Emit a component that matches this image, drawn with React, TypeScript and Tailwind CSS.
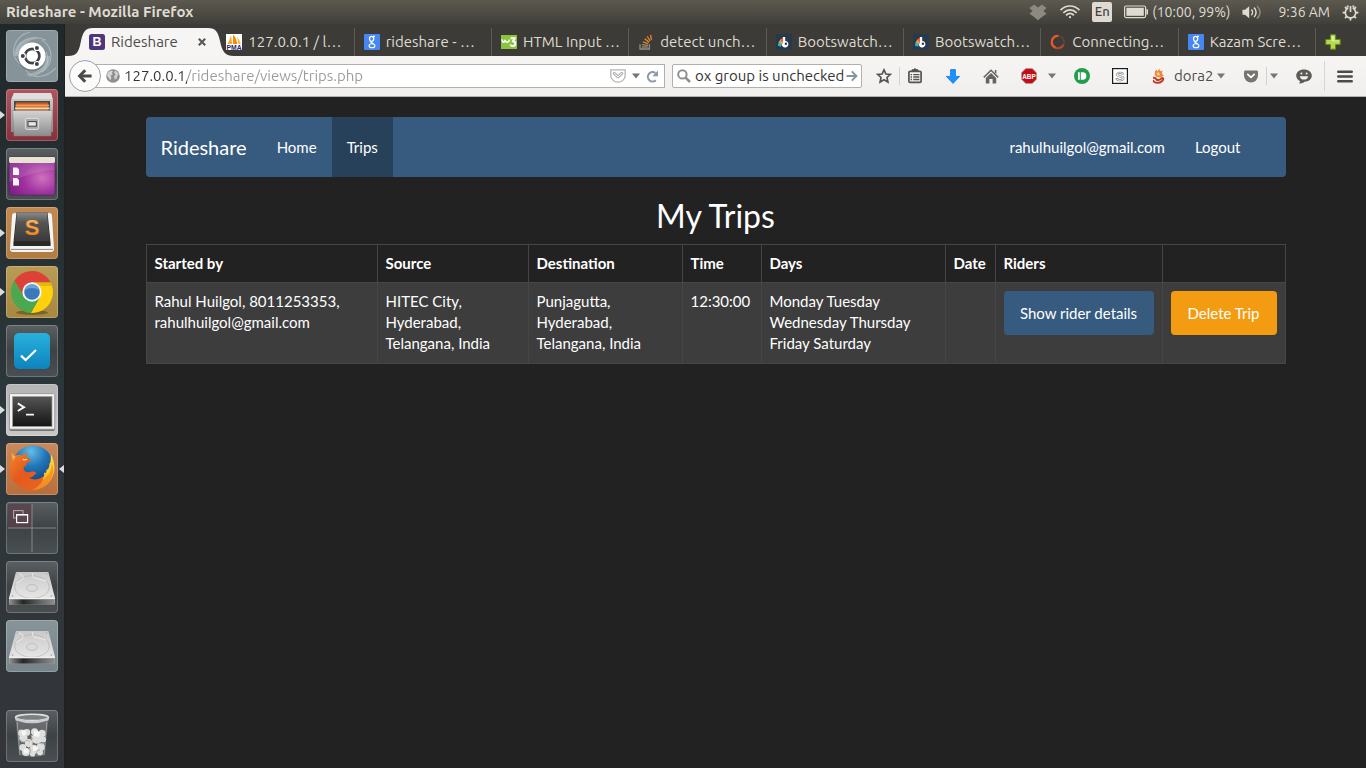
import type { ReactNode } from "react";

/* ---------- Panel icons ---------- */

const DropboxIcon = () => (
  <svg width="18" height="17" viewBox="0 0 18 17" fill="#8b8981">
    <path d="M5.2 0.6 9 3.4 12.8 0.6 17.6 4 14.4 6.9 17.6 9.8 13.6 12.6 9 16.2 4.4 12.6 0.4 9.8 3.6 6.9 0.4 4Z" />
  </svg>
);

const WifiIcon = () => (
  <svg width="22" height="16" viewBox="0 0 22 16" fill="none" stroke="#dfdbd2" strokeWidth="1.7">
    <path d="M1.5 6.2C7 0.6 15 0.6 20.5 6.2" />
    <path d="M4.3 8.8C8.2 5 13.8 5 17.7 8.8" />
    <path d="M7 11.3C9.4 9 12.6 9 15 11.3" />
    <circle cx="11" cy="13.2" r="1.1" fill="#dfdbd2" stroke="none" />
  </svg>
);

const BatteryIcon = () => (
  <svg width="24" height="14" viewBox="0 0 24 14">
    <rect x="0.6" y="1" width="21" height="11.6" rx="1.5" fill="none" stroke="#dfdbd2" strokeWidth="1.2" />
    <rect x="2.4" y="2.8" width="17.4" height="8" fill="#dfdbd2" />
    <path d="M22.4 4.2H24v5.2h-1.6z" fill="#dfdbd2" />
  </svg>
);

const VolumeIcon = () => (
  <svg width="20" height="15" viewBox="0 0 20 15" fill="none" strokeWidth="1.5">
    <path d="M0.5 4.8H3L7.2 1.2V13.2L3 9.8H0.5Z" fill="#dfdbd2" />
    <path d="M9.4 4.4C10.9 6 10.9 8.6 9.4 10.2" stroke="#dfdbd2" />
    <path d="M12 2.6C14.8 5 14.8 9.6 12 12" stroke="#dfdbd2" />
    <path d="M15 1C19 4.4 19 10.2 15 13.6" stroke="#8b8981" />
  </svg>
);

const GearIcon = () => (
  <svg width="17" height="17" viewBox="0 0 17 17" fill="none" stroke="#dfdbd2">
    <path d="M6.2 4A5.2 5.2 0 1 0 10.8 4" strokeWidth="1.7" />
    <path d="M8.5 2V8" strokeWidth="1.7" />
    <path
      d="M4.8 4.8 3 3M12.2 4.8 14 3M3.3 8.6H0.6M13.7 8.6H16.4M4.8 12.3 3 14.1M12.2 12.3 14 14.1M8.5 13.8V16.5M6 3.6 5.4 1.4M11 3.6 11.6 1.4"
      strokeWidth="1.8"
    />
  </svg>
);

/* ---------- Tab favicons ---------- */

const BootstrapFav = () => (
  <svg width="16" height="16" viewBox="0 0 16 16">
    <rect width="16" height="16" rx="2.5" fill="#4f3579" />
    <text x="8" y="12.4" textAnchor="middle" fontFamily="Liberation Sans, sans-serif" fontWeight="bold" fontSize="12.5" fill="#fff">B</text>
  </svg>
);

const PmaFav = () => (
  <svg width="16" height="16" viewBox="0 0 16 16">
    <rect width="16" height="16" fill="#fff" />
    <path d="M1.4 10C3 7.6 4 4.6 5 1.6L6.2 10Z" fill="#f7a531" />
    <path d="M7 10V0.6C9.6 3 10.8 6.4 11.2 10Z" fill="#f58a00" />
    <path d="M11.8 10C12 7 11.6 5 10.8 3.2 13.4 5 14.4 7.6 14.8 10Z" fill="#f9b95b" />
    <text x="8" y="15.8" textAnchor="middle" fontFamily="Liberation Sans, sans-serif" fontWeight="bold" fontSize="6.8" fill="#27276b">PMA</text>
  </svg>
);

const GoogleFav = () => (
  <svg width="16" height="16" viewBox="0 0 16 16">
    <rect width="16" height="16" rx="1" fill="#4787f3" />
    <g fill="none" stroke="#fff">
      <ellipse cx="7.6" cy="4.8" rx="2.1" ry="2.5" strokeWidth="1.3" />
      <ellipse cx="8" cy="11.8" rx="2.9" ry="2" strokeWidth="1.1" />
      <path d="M9 2.3H11M7 7.4C6.2 8.6 8 8.8 9.6 9.9" strokeWidth="1.2" />
    </g>
  </svg>
);

const W3Fav = () => (
  <svg width="16" height="16" viewBox="0 0 16 16">
    <rect y="1" width="16" height="14" fill="#8bc53f" />
    <g fill="none" stroke="#fff" strokeLinejoin="round">
      <path d="M1 5.4C1.4 8.6 3.4 9 4 6.2 4.6 9 7.6 9 8.4 5.6" strokeWidth="1.6" />
      <path d="M9.6 4.2H14L11.8 7.2C15.4 7.4 15 12 11.8 12 10.6 12 9.8 11.4 9.4 10.6" strokeWidth="1.9" />
    </g>
  </svg>
);

const StackFav = () => (
  <svg width="16" height="16" viewBox="0 0 16 16" fill="none">
    <path d="M2 10.2V15H11.4V10.2" stroke="#8f8e8a" strokeWidth="1.3" />
    <path d="M3.8 13H9.8" stroke="#9b8f7d" strokeWidth="1.3" />
    <path d="M4 10.6 10 11.3" stroke="#b08a5b" strokeWidth="1.3" />
    <path d="M4.8 7.8 10.4 9.7" stroke="#cf8a3b" strokeWidth="1.3" />
    <path d="M6.6 4.8 11.2 8.3" stroke="#e58a29" strokeWidth="1.3" />
    <path d="M9.2 2.4 12.2 7" stroke="#f08424" strokeWidth="1.3" />
    <path d="M12.6 0.8 13.4 6" stroke="#f58220" strokeWidth="1.3" />
  </svg>
);

const BootswatchFav = () => (
  <svg width="16" height="16" viewBox="0 0 16 16">
    <rect width="16" height="16" rx="1" fill="#26394d" />
    <path d="M7.2 3 4.4 5.6V9H7.4Z" fill="#e8603c" />
    <path d="M4.4 5.6 2.6 8.2 4.6 10.8 7 9Z" fill="#f2a03a" />
    <path d="M2.6 8.2 1.8 11.6 5 12.8 6 10Z" fill="#36b5c8" />
    <path d="M7 3H9.2V6.9A3.3 3.3 0 1 1 6 11.4C5.6 10 7 9 7 8Z" fill="#fff" />
    <circle cx="9.9" cy="9.8" r="1.2" fill="#26394d" />
  </svg>
);

const SpinnerFav = () => (
  <svg width="16" height="16" viewBox="0 0 16 16" fill="none" strokeWidth="2.2">
    <circle cx="8" cy="8" r="6.2" stroke="#5b4036" />
    <path d="M13.6 10.6A6.2 6.2 0 0 1 4.4 13.1" stroke="#b04a2b" />
    <path d="M5.4 13.6A6.2 6.2 0 0 1 8.4 1.8" stroke="#e9572b" />
  </svg>
);

/* ---------- Toolbar icons ---------- */

const Caret = () => (
  <svg width="8" height="6" viewBox="0 0 8 6">
    <path d="M0 0.6H8L4 5.6Z" fill="#77756f" />
  </svg>
);

const BackIcon = () => (
  <svg width="16" height="16" viewBox="0 0 16 16" fill="none" stroke="#4c4b48">
    <path d="M8.2 2.2 2.6 8 8.2 13.8" strokeWidth="3" />
    <path d="M3 8H14.6" strokeWidth="3" />
  </svg>
);

const GlobeIcon = () => (
  <svg width="14" height="14" viewBox="0 0 14 14" className="shrink-0">
    <circle cx="7" cy="7" r="6.8" fill="#8e8e8e" />
    <path d="M2 3.6C4 1.2 6.4 1.4 7 2.2L5.8 3.8 6.8 5.2 4.6 6.6 5.4 8.6 4.4 11.6 2.6 8.8 1 6.6Z" fill="#d6d6d6" />
    <path d="M8.6 1.6 11.4 3 12.8 6 11.4 6.6 10.6 9.8 8.8 10.6 8 7.4 9.4 5.4 8.2 3.8Z" fill="#cfcfcf" />
  </svg>
);

const PocketOutline = () => (
  <svg width="16" height="14" viewBox="0 0 16 14" fill="none" stroke="#b5b5b5">
    <path d="M0.8 0.8H15.2V6.2A7.2 7 0 0 1 0.8 6.2Z" strokeWidth="1.3" />
    <path d="M4.2 4.4 8 8 11.8 4.4" strokeWidth="3" strokeLinecap="round" strokeLinejoin="round" />
    <path d="M4.2 4.4 8 8 11.8 4.4" strokeWidth="1" stroke="#f5f5f5" strokeLinecap="round" strokeLinejoin="round" />
  </svg>
);

const ReloadIcon = () => (
  <svg width="13" height="13" viewBox="0 0 13 13">
    <path d="M9.8 10.2A4.7 4.7 0 1 1 9.4 3" fill="none" stroke="#8d9aa8" strokeWidth="2.1" />
    <path d="M12 0.6V6.2H6.4Z" fill="#8d9aa8" />
  </svg>
);

const SearchIcon = () => (
  <svg width="14" height="14" viewBox="0 0 14 14" fill="none" stroke="#8f8f8f" className="shrink-0">
    <circle cx="5.4" cy="5.4" r="4.2" strokeWidth="2" />
    <path d="M8.6 8.6 13 13" strokeWidth="2.6" />
  </svg>
);

const GoIcon = () => (
  <svg width="12" height="12" viewBox="0 0 12 12" fill="none" stroke="#8795a3" strokeWidth="2">
    <path d="M0.5 6H10M5.8 1.4 10.4 6 5.8 10.6" />
  </svg>
);

const StarIcon = () => (
  <svg width="16" height="16" viewBox="0 0 16 16" fill="none" stroke="#555451" strokeWidth="1.7" strokeLinejoin="miter">
    <path d="M8 1.9 9.9 6 14.2 6.5 11 9.5 11.9 14 8 11.8 4.1 14 5 9.5 1.8 6.5 6.1 6Z" />
  </svg>
);

const ClipboardIcon = () => (
  <svg width="14" height="16" viewBox="0 0 14 16" fill="none" stroke="#555451">
    <rect x="0.9" y="3.4" width="12.2" height="11" rx="1.2" strokeWidth="1.7" />
    <path d="M4 3.2V1.8H5.4A1.7 1.4 0 0 1 8.6 1.8H10V3.2Z" fill="#555451" strokeWidth="1" />
    <path d="M2.6 6.6H4M5.2 6.6H11.4M2.6 9H4M5.2 9H11.4M2.6 11.5H4M5.2 11.5H11.4" strokeWidth="1.3" />
  </svg>
);

const DownloadIcon = () => (
  <svg width="14" height="15" viewBox="0 0 14 15">
    <path d="M4.6 0.6H9.4V7.4H13.6L7 14.4 0.4 7.4H4.6Z" fill="#1e90ff" stroke="#0b76e0" strokeWidth="0.8" strokeLinejoin="round" />
  </svg>
);

const HomeIcon = () => (
  <svg width="16" height="15" viewBox="0 0 16 15">
    <path d="M0.8 8.4 8 1.2 15.2 8.4" fill="none" stroke="#66645f" strokeWidth="1.5" />
    <path d="M11.8 1H13.4V5L11.8 3.4Z" fill="#66645f" />
    <path d="M2.8 9 8 4 13.2 9V14.6H9.6V10H6.4V14.6H2.8Z" fill="#66645f" />
  </svg>
);

const AbpIcon = () => (
  <svg width="16" height="16" viewBox="0 0 16 16">
    <path d="M4.8 0.5H11.2L15.5 4.8V11.2L11.2 15.5H4.8L0.5 11.2V4.8Z" fill="#c70d13" stroke="#a5a19c" strokeWidth="0.8" />
    <text x="8" y="10.6" textAnchor="middle" fontFamily="Liberation Sans, sans-serif" fontWeight="bold" fontSize="6.4" fill="#fff">ABP</text>
  </svg>
);

const PushbulletIcon = () => (
  <svg width="16" height="16" viewBox="0 0 16 16">
    <circle cx="8" cy="8" r="8" fill="#239d4a" />
    <path d="M4 4.2H5.8V11.8H4ZM6.8 4.2H8.6A3.8 3.8 0 0 1 8.6 11.8H6.8Z" fill="#fff" />
  </svg>
);

const ScriptIcon = () => (
  <svg width="16" height="16" viewBox="0 0 16 16">
    <rect x="0.6" y="0.6" width="14.8" height="14.8" fill="#fff" stroke="#1c1c1c" strokeWidth="1.2" />
    <text x="8" y="12.8" textAnchor="middle" fontFamily="Liberation Sans, sans-serif" fontWeight="bold" fontSize="13.5" fill="#fff" stroke="#777" strokeWidth="0.6">S</text>
  </svg>
);

const DoraIcon = () => (
  <svg width="14" height="16" viewBox="0 0 14 16" fill="none">
    <path d="M4 3.6 5.6 1.4 6.4 3.6 8.6 0.8 9 3.2 11.4 2.6 11 5.4 12.6 7.8 9.6 9.4 5.6 9 3.6 6.8Z" fill="#ea8a34" />
    <path d="M5.4 5 8 4.2 9 7.2 6.4 7.6Z" fill="#f9d294" />
    <path d="M2 9.8C6.6 9.2 3.8 12.6 7.4 12 11 11.4 10.6 9 12 10.2 13 12 10 14.8 6.6 14.8 3 14.8 2.4 13.2 3 12.4" stroke="#bf3c26" strokeWidth="2" />
  </svg>
);

const PocketSolid = () => (
  <svg width="14" height="13" viewBox="0 0 14 13">
    <path d="M1.4 0.4H12.6Q14 0.4 14 1.8V5.6A7 7 0 0 1 0 5.6V1.8Q0 0.4 1.4 0.4Z" fill="#77756f" />
    <path d="M3.8 4.4 7 7.4 10.2 4.4" fill="none" stroke="#fff" strokeWidth="1.8" strokeLinecap="round" strokeLinejoin="round" />
  </svg>
);

const HelloIcon = () => (
  <svg width="16" height="15" viewBox="0 0 16 15">
    <path d="M8 0.4C12.6 0.4 15.8 3 15.8 6.6S12.6 12.8 8.6 12.8C7.4 14 5 14.6 3 14.4 4 13.6 4 12.8 3.8 12 1.6 10.8 0.2 9 0.2 6.6 0.2 3 3.4 0.4 8 0.4Z" fill="#5c5b56" />
    <circle cx="5.4" cy="4.6" r="1" fill="#f3f2f1" />
    <circle cx="10.6" cy="4.6" r="1" fill="#f3f2f1" />
    <path d="M3.8 7.2H12.2C11.8 9.6 10.4 10.6 8 10.6S4.2 9.6 3.8 7.2Z" fill="#f3f2f1" />
  </svg>
);

const MenuIcon = () => (
  <svg width="16" height="13" viewBox="0 0 16 13" stroke="#4c4b48" strokeWidth="2.6" strokeLinecap="round">
    <path d="M1.3 1.8H14.7M1.3 6.5H14.7M1.3 11.2H14.7" />
  </svg>
);

/* ---------- Launcher artwork ---------- */

const Art = ({ children }: { children: ReactNode }) => (
  <svg width="52" height="52" viewBox="0 0 52 52" className="block">
    {children}
  </svg>
);

const DashArt = () => (
  <Art>
    <g fill="none" stroke="#c4ced2" strokeOpacity="0.55" strokeWidth="1.2">
      <path d="M11 24C10 10 26 4 40 10M14 34C2 24 8 6 24 2M40 22C46 34 36 46 22 46M36 42C48 34 48 18 36 10M20 40C26 50 40 48 50 38" />
    </g>
    <path d="M8 26C8 12 22 6 36 8 26 8 14 14 13 26ZM44 26C44 40 32 48 18 44 30 44 40 38 39 26Z" fill="#c2ccd0" fillOpacity="0.45" />
    <circle cx="26" cy="27" r="14" fill="#5d6a70" fillOpacity="0.6" />
    <circle cx="26" cy="26" r="13.6" fill="#fff" />
    <circle cx="26.2" cy="26" r="7.2" fill="none" stroke="#3c4447" strokeWidth="2.7" />
    <g fill="#3c4447" stroke="#fff" strokeWidth="1.2">
      <circle cx="16.8" cy="26" r="2.6" />
      <circle cx="30.9" cy="17.9" r="2.6" />
      <circle cx="30.9" cy="34.1" r="2.6" />
    </g>
  </Art>
);

const FilesArt = () => (
  <Art>
    <defs>
      <linearGradient id="cab" x1="0" y1="0" x2="0" y2="1">
        <stop offset="0" stopColor="#d4d4d4" />
        <stop offset="1" stopColor="#8c8c8c" />
      </linearGradient>
    </defs>
    <path d="M8 4H45L47 11V43H5V11Z" fill="url(#cab)" />
    <path d="M8 4H45L46.6 10H5.6Z" fill="#dedede" />
    <rect x="8" y="12" width="36" height="10" fill="#4d4845" />
    <path d="M10 13.6H42V22H10Z" fill="#c85f22" />
    <path d="M9.5 15.4H43V17.4H9.5Z" fill="#f39b50" />
    <path d="M9 18.4H43.5V20.2H9Z" fill="#fbe0bd" />
    <path d="M6.6 21.4H46.4L45 47H8Z" fill="url(#cab)" stroke="#7f7f7f" strokeWidth="0.5" />
    <rect x="19.4" y="29.4" width="13.2" height="11" rx="1.6" fill="#a8a8a8" stroke="#dedede" strokeWidth="1" />
    <rect x="22" y="32.6" width="8.4" height="4.6" fill="#e8e8e8" stroke="#4c4c4c" strokeWidth="1.1" />
  </Art>
);

const DesktopArt = () => (
  <Art>
    <defs>
      <radialGradient id="desk" cx="0.72" cy="0.55" r="0.8">
        <stop offset="0" stopColor="#cf72bd" />
        <stop offset="0.5" stopColor="#a033a0" />
        <stop offset="1" stopColor="#7d1d86" />
      </radialGradient>
    </defs>
    <rect x="3" y="9" width="46" height="38" rx="2" fill="url(#desk)" stroke="#511c5b" strokeWidth="0.6" />
    <path d="M3.4 15H48.6V22C34 22 18 28 3.4 34Z" fill="#fff" fillOpacity="0.12" />
    <rect x="3" y="9" width="46" height="6" rx="1.4" fill="#e6e4d0" />
    <path d="M7 19.4H11L13 21.4V27H7ZM7 30H11L13 32V37.6H7Z" fill="#f6f2f6" />
  </Art>
);

const SublimeArt = () => (
  <Art>
    <defs>
      <linearGradient id="key" x1="0" y1="0" x2="0" y2="1">
        <stop offset="0" stopColor="#8a8a8a" />
        <stop offset="0.35" stopColor="#555" />
        <stop offset="1" stopColor="#3a3a3a" />
      </linearGradient>
      <linearGradient id="ess" x1="0" y1="0" x2="0" y2="1">
        <stop offset="0" stopColor="#ffc36b" />
        <stop offset="1" stopColor="#f1760b" />
      </linearGradient>
    </defs>
    <path d="M6 9Q6 6 9 6H43Q46 6 46 9L48 42Q48 45 45 45H7Q4 45 4 42Z" fill="#f4f4f4" />
    <path d="M5 42.4H47" stroke="#8d8d8d" strokeWidth="1" />
    <path d="M10.5 5.4H41.5L44.6 36V39H7.4V36Z" fill="#282828" />
    <path d="M11 5.4H41L43.8 34.2H8.2Z" fill="url(#key)" />
    <text x="26" y="27.6" textAnchor="middle" fontFamily="Liberation Sans, sans-serif" fontWeight="bold" fontSize="22" fill="url(#ess)">S</text>
  </Art>
);

const ChromeArt = () => (
  <Art>
    <ellipse cx="26" cy="46.6" rx="16" ry="2.4" fill="#4d3d16" fillOpacity="0.5" />
    <path d="M8.4 14.6A21 21 0 0 1 44.7 16.5L26 16.5 17.8 30.75Z" fill="#dc4238" />
    <path d="M44.7 16.5A21 21 0 0 1 24.9 46.95L34.2 30.75 26 16.5Z" fill="#fdd20a" />
    <path d="M24.9 46.95A21 21 0 0 1 8.4 14.6L17.8 30.75 34.2 30.75Z" fill="#4aa84f" />
    <path d="M26 16.5H44.7L46 20H28Z" fill="#b3842a" fillOpacity="0.35" />
    <circle cx="26" cy="26" r="9.7" fill="#f4f4f4" />
    <circle cx="26" cy="26" r="7.8" fill="#3a79bd" />
    <path d="M18.6 24A7.8 7.8 0 0 1 33.4 24Q26 20 18.6 24Z" fill="#6ba4db" />
  </Art>
);

const TasksArt = () => (
  <Art>
    <defs>
      <linearGradient id="task" x1="0" y1="0" x2="0" y2="1">
        <stop offset="0" stopColor="#29b1dd" />
        <stop offset="1" stopColor="#0d83bd" />
      </linearGradient>
    </defs>
    <rect x="8" y="8" width="36" height="36" rx="5" fill="url(#task)" />
    <path d="M15 30.6 19.6 35 30 25" fill="none" stroke="#fff" strokeWidth="2.2" />
  </Art>
);

const TerminalArt = () => (
  <Art>
    <defs>
      <linearGradient id="term" x1="0" y1="0" x2="0" y2="1">
        <stop offset="0" stopColor="#565656" />
        <stop offset="0.55" stopColor="#303030" />
        <stop offset="1" stopColor="#151515" />
      </linearGradient>
    </defs>
    <rect x="3.4" y="10" width="45.4" height="37" rx="1.4" fill="#777" />
    <rect x="3.4" y="9.6" width="45.4" height="35.6" rx="1.2" fill="#f3f3f3" stroke="#8b8b8b" strokeWidth="0.8" />
    <rect x="6.6" y="12.6" width="39.4" height="30" fill="url(#term)" stroke="#9b9b9b" strokeWidth="0.8" />
    <path d="M11.8 19.4 18 23.2 11.8 27" fill="none" stroke="#f4f4f4" strokeWidth="2" />
    <path d="M20 30.6H28" stroke="#f4f4f4" strokeWidth="1.6" />
  </Art>
);

const FirefoxArt = () => (
  <Art>
    <defs>
      <radialGradient id="sea" cx="0.45" cy="0.15" r="0.8">
        <stop offset="0" stopColor="#66bde6" />
        <stop offset="0.45" stopColor="#2277b9" />
        <stop offset="1" stopColor="#133f79" />
      </radialGradient>
      <linearGradient id="fox" x1="0" y1="0" x2="0.9" y2="1">
        <stop offset="0" stopColor="#f08a2c" />
        <stop offset="0.5" stopColor="#e5591d" />
        <stop offset="1" stopColor="#e8641f" />
      </linearGradient>
      <linearGradient id="tail" x1="0" y1="0" x2="0" y2="1">
        <stop offset="0" stopColor="#fbe34a" />
        <stop offset="0.5" stopColor="#fac92d" />
        <stop offset="1" stopColor="#ef8322" />
      </linearGradient>
    </defs>
    <circle cx="27" cy="23" r="20.6" fill="url(#sea)" />
    <path d="M44.6 11C46.6 14 48.4 19 48.4 25 48.4 37 39 47 26 47 30 44 34 41 35.4 36 38 35 38.4 32 38 29.6 40 31 40.6 29 40.4 26.6 42.6 27 43.4 23.6 43.6 20 44.8 20.6 45 16 44.6 11Z" fill="url(#tail)" />
    <path d="M45.6 20C46 28 42 34 36 37.6 35 42 31 45 27 47 38 46 45.6 39 47 30 47.4 26 46.8 22 45.6 20Z" fill="#f08c22" fillOpacity="0.75" />
    <path d="M5.4 8C6.2 10.4 7.6 12 9.4 12.6 11.6 11.6 14 11.6 15.8 12.4 17.6 10.8 20 9.8 22.4 9.4 20.8 11 20.4 13 21 14.6L24.6 16.4C25.4 18.6 21.8 19.2 20.4 20.6 20.6 22.6 20 23.4 18.2 23.6 16.4 26.4 19.2 30.2 23.4 29.2 25.6 28.6 28.6 27.6 30.6 30.4 28.4 30.8 27.6 34.2 23.2 34.8 27.8 37.6 33.4 36.6 37.4 33 37 39 33 44 26 47 14 47.2 4.2 38 3.8 26.4 3.6 21.6 4.4 18 6 15 5 13 4.8 10.4 5.4 8Z" fill="url(#fox)" />
    <path d="M6 10C7 12 8.4 13.2 9.8 13.6 8.4 15 7.4 16.6 6.8 18.4 7 16.6 6.8 15.4 6.2 14.4Z" fill="#f9b04b" />
    <path d="M16.6 16.4C18 17 19.8 16.8 21 16" fill="none" stroke="#fbd7a1" strokeWidth="1.2" />
  </Art>
);

const WorkspaceArt = () => (
  <Art>
    <rect x="2" y="2" width="24" height="24" fill="#5b3f4b" fillOpacity="0.75" />
    <path d="M26 2V50M2 26H50" stroke="#8d9092" strokeWidth="0.9" />
    <rect x="7.6" y="8.6" width="9.4" height="7.4" fill="none" stroke="#b7abb0" strokeWidth="1" />
    <rect x="10.6" y="12.6" width="11" height="8" fill="#5d4450" stroke="#fff" strokeWidth="1.2" />
    <path d="M10.2 12.8H22" stroke="#fff" strokeWidth="1.6" />
  </Art>
);

const DriveArt = () => (
  <Art>
    <defs>
      <linearGradient id="lid" x1="0" y1="0" x2="0" y2="1">
        <stop offset="0" stopColor="#c9c9c9" />
        <stop offset="1" stopColor="#e6e6e6" />
      </linearGradient>
      <linearGradient id="lip" x1="0" y1="0" x2="1" y2="0">
        <stop offset="0" stopColor="#8f8f8f" />
        <stop offset="0.3" stopColor="#262626" />
        <stop offset="0.75" stopColor="#6c6c6c" />
        <stop offset="1" stopColor="#8d8d8d" />
      </linearGradient>
    </defs>
    <path d="M10 11H42.4L49 37H3Z" fill="url(#lid)" />
    <g fill="none" stroke="#b4b4b4" strokeWidth="0.7">
      <ellipse cx="26" cy="26" rx="17.4" ry="11.4" />
      <path d="M12 12.6C20 15 18 19 10 22M27 12C24 18 32 17 40 20" stroke="#f7f7f7" />
      <ellipse cx="26" cy="27" rx="5.6" ry="3.4" fill="#dadada" />
    </g>
    <g fill="#999">
      <circle cx="6.6" cy="35" r="0.8" />
      <circle cx="45.4" cy="35" r="0.8" />
      <circle cx="11.8" cy="12.8" r="0.6" />
      <circle cx="40.6" cy="12.8" r="0.6" />
    </g>
    <path d="M3 37H49V43.4H3Z" fill="#a3a3a3" />
    <path d="M3.6 38.4H48.4V43.4H3.6Z" fill="url(#lip)" />
    <path d="M3 37.4H49" stroke="#fafafa" strokeWidth="1" />
  </Art>
);

const TrashArt = () => (
  <Art>
    <path d="M9.6 9 13 45Q26 49 39 45L42.4 9Z" fill="#a5a9aa" fillOpacity="0.32" />
    <path d="M11.2 12 14 45M40.8 12 38 45" stroke="#dfe1e2" strokeOpacity="0.45" strokeWidth="1" />
    <g fill="#dededc">
      <circle cx="15.6" cy="23" r="3.4" />
      <circle cx="20.8" cy="22.4" r="3.4" />
      <circle cx="17.4" cy="28" r="4.2" />
      <circle cx="28.6" cy="21.8" r="3.6" />
      <circle cx="36" cy="23.4" r="3.6" />
      <circle cx="31" cy="28.4" r="5.4" />
      <circle cx="37" cy="29.6" r="3" />
      <circle cx="22.8" cy="33" r="4" />
      <circle cx="16.8" cy="37.4" r="3.4" />
      <circle cx="20" cy="42" r="4" />
      <circle cx="28" cy="39.4" r="4.6" />
      <circle cx="34.6" cy="37" r="4" />
      <circle cx="34" cy="42.6" r="3" />
      <circle cx="26.6" cy="44" r="2.6" />
    </g>
    <g fill="#f6f6f4">
      <path d="M15 21 19 20 20.6 24 17 26ZM28 20 34 22 33 27 28 26ZM17 40 21 38 23 42 19 44ZM27 36 32 37 31 41 27 41Z" />
    </g>
    <path d="M14 30 18 32 21 30 24 32M25 25 26.4 29 25 31M22 37 25 40 23.4 43M33 33 35.6 34 38 33M30 43 31.6 40 34 40" fill="none" stroke="#acadab" strokeWidth="0.9" />
    <ellipse cx="26" cy="7.4" rx="16.4" ry="3.2" fill="#7d8081" stroke="#e2e2e2" strokeWidth="1.6" />
    <path d="M9 7.4Q26 14.6 43 7.4L42.4 10.6Q26 16 9.6 10.6Z" fill="#cbcccb" />
  </Art>
);

/* ---------- Data ---------- */

const tabs: { title: string; icon: ReactNode; active?: boolean }[] = [
  { title: "Rideshare", icon: <BootstrapFav />, active: true },
  { title: "127.0.0.1 / l…", icon: <PmaFav /> },
  { title: "rideshare - …", icon: <GoogleFav /> },
  { title: "HTML Input …", icon: <W3Fav /> },
  { title: "detect unch…", icon: <StackFav /> },
  { title: "Bootswatch…", icon: <BootswatchFav /> },
  { title: "Bootswatch…", icon: <BootswatchFav /> },
  { title: "Connecting…", icon: <SpinnerFav /> },
  { title: "Kazam Scre…", icon: <GoogleFav /> },
];

const darkTile = "bg-linear-to-b from-[#5a5f61] via-[#3d4245] to-[#4a4f52]";

const launcher: { name: string; art: ReactNode; tile: string; running?: boolean; focused?: boolean; last?: boolean }[] = [
  { name: "Search your computer", art: <DashArt />, tile: "bg-[#869398]" },
  { name: "Files", art: <FilesArt />, tile: "bg-linear-to-b from-[#b0555f] to-[#86303c]", running: true },
  { name: "Desktop", art: <DesktopArt />, tile: darkTile },
  { name: "Sublime Text", art: <SublimeArt />, tile: "bg-linear-to-b from-[#c08a52] to-[#b27b40]", running: true },
  { name: "Google Chrome", art: <ChromeArt />, tile: "bg-linear-to-b from-[#b89b55] to-[#a6883f]", running: true },
  { name: "Tasks", art: <TasksArt />, tile: darkTile },
  { name: "Terminal", art: <TerminalArt />, tile: "bg-linear-to-b from-[#b4b4b4] to-[#c8c8c8]", running: true },
  { name: "Firefox", art: <FirefoxArt />, tile: "bg-linear-to-b from-[#c98a5c] to-[#b86e3c]", running: true, focused: true },
  { name: "Workspace Switcher", art: <WorkspaceArt />, tile: darkTile },
  { name: "Drive 1", art: <DriveArt />, tile: darkTile },
  { name: "Drive 2", art: <DriveArt />, tile: "bg-linear-to-b from-[#879499] to-[#76848a]" },
  { name: "Trash", art: <TrashArt />, tile: darkTile, last: true },
];

const columns = [
  { label: "Started by", width: "" },
  { label: "Source", width: "w-[151px]" },
  { label: "Destination", width: "w-[154px]" },
  { label: "Time", width: "w-[79px]" },
  { label: "Days", width: "w-[184px]" },
  { label: "Date", width: "w-[50px]" },
  { label: "Riders", width: "w-[167px]" },
  { label: "", width: "w-[123px]" },
];

const trips = [
  {
    startedBy: "Rahul Huilgol, 8011253353, rahulhuilgol@gmail.com",
    source: "HITEC City, Hyderabad, Telangana, India",
    destination: "Punjagutta, Hyderabad, Telangana, India",
    time: "12:30:00",
    days: "Monday Tuesday Wednesday Thursday Friday Saturday",
    date: "",
  },
];

/* ---------- Layout ---------- */

const uiFont = "font-['Ubuntu','Noto_Sans',sans-serif]";

function SystemPanel() {
  return (
    <header className="flex h-6 items-center justify-between bg-linear-to-b from-[#5c594f] to-[#403f3a] pr-[7px] pl-[6px] text-[14px] text-[#dfdbd2]">
      <h1 className="text-[15px] font-bold">Rideshare - Mozilla Firefox</h1>
      <div className="flex items-center">
        <span className="mr-3"><DropboxIcon /></span>
        <span className="mr-[11px]"><WifiIcon /></span>
        <span className="mr-3 flex h-5 w-5 items-center justify-center rounded-[2px] bg-[#dfdbd2] text-[13px] font-medium text-[#45433e]">En</span>
        <span className="mr-1"><BatteryIcon /></span>
        <span className="mr-3">(10:00, 99%)</span>
        <span className="mr-4"><VolumeIcon /></span>
        <span className="mr-3">9:36 AM</span>
        <GearIcon />
      </div>
    </header>
  );
}

function Launcher() {
  return (
    <nav
      aria-label="Launcher"
      className="flex w-[65px] shrink-0 flex-col gap-[7px] border-r border-[#1c2022] bg-linear-to-b from-[#20282a] via-[#2c373b] to-[#33353a] py-[6px]"
    >
      {launcher.map((item) => (
        <div key={item.name} className={item.last ? "mt-auto flex items-center" : "flex items-center"}>
          <span className="w-[6px]">
            {item.running && (
              <svg width="5" height="8" viewBox="0 0 5 8"><path d="M0 0 5 4 0 8Z" fill="#dcdcdc" /></svg>
            )}
          </span>
          <button
            type="button"
            aria-label={item.name}
            className={`h-[52px] w-[52px] shrink-0 overflow-hidden rounded-[4px] shadow-[inset_0_0_0_1px_rgba(255,255,255,0.22)] ${item.tile}`}
          >
            {item.art}
          </button>
          <span className="flex w-[6px] justify-end">
            {item.focused && (
              <svg width="5" height="8" viewBox="0 0 5 8"><path d="M5 0 0 4 5 8Z" fill="#dcdcdc" /></svg>
            )}
          </span>
        </div>
      ))}
    </nav>
  );
}

function TabStrip() {
  return (
    <div role="tablist" className="flex h-8 items-end bg-[#3c3b37] pl-[14px] text-[15px]">
      {tabs.map((tab, i) => (
        <div
          key={i}
          className={`relative flex h-7 min-w-0 flex-1 items-center border-l pl-[9px] ${i > 1 ? "border-[#5d5b53]" : "border-transparent"}`}
        >
          {tab.active && (
            <svg
              className="absolute top-0 -left-3 h-7 w-[168px]"
              viewBox="0 0 168 28"
              preserveAspectRatio="none"
              aria-hidden="true"
            >
              <path d="M0 28C10 28 11 22 13 13 15 4 17 0 25 0H140C148 0 150 4 152 13 154 22 156 28 166 28Z" fill="#f6f5f4" />
            </svg>
          )}
          <button
            type="button"
            role="tab"
            aria-selected={!!tab.active}
            className={`relative flex min-w-0 items-center gap-[6px] ${tab.active ? "text-[#4c4c4c]" : "text-[#dfdbd2]"}`}
          >
            <span className="shrink-0">{tab.icon}</span>
            <span className="overflow-hidden whitespace-nowrap">{tab.title}</span>
          </button>
          {tab.active && (
            <button type="button" aria-label="Close tab" className="relative mr-[10px] ml-auto">
              <svg width="8" height="8" viewBox="0 0 8 8" stroke="#5a5a58" strokeWidth="2.2">
                <path d="M0.8 0.8 7.2 7.2M7.2 0.8 0.8 7.2" />
              </svg>
            </button>
          )}
        </div>
      ))}
      <div className="flex h-7 w-[51px] items-center border-l border-[#5d5b53] pl-[9px]">
        <button type="button" aria-label="New tab">
          <svg width="16" height="16" viewBox="0 0 16 16">
            <path d="M5.4 0.8H10.6V5.4H15.2V10.6H10.6V15.2H5.4V10.6H0.8V5.4H5.4Z" fill="#b5d94c" stroke="#5f8a1c" strokeWidth="1" />
            <path d="M6.4 1.8H9.6V6.4H14.2V7.6H6.4Z" fill="#d8ec93" />
          </svg>
        </button>
      </div>
    </div>
  );
}

function ToolButton({ label, children }: { label: string; children: ReactNode }) {
  return (
    <button type="button" aria-label={label} className="flex h-7 w-7 shrink-0 items-center justify-center">
      {children}
    </button>
  );
}

function Toolbar() {
  return (
    <div className="flex h-[41px] items-center border-b border-[#b5b2ad] bg-linear-to-b from-[#f6f5f4] to-[#f0efed] pr-[7px] pl-1 text-[15px] text-[#4c4c4c]">
      <button
        type="button"
        aria-label="Back"
        className="z-10 flex h-8 w-8 shrink-0 items-center justify-center rounded-full border border-[#9aa3af] bg-[#fbfbfa]"
      >
        <BackIcon />
      </button>
      <div className="-ml-[6px] flex h-6 min-w-0 flex-1 items-center border border-[#b3b0ab] bg-white pr-[5px] pl-[10px]">
        <GlobeIcon />
        <input
          aria-label="Address"
          defaultValue="127.0.0.1/rideshare/views/trips.php"
          className="ml-1 min-w-0 flex-1 bg-[linear-gradient(90deg,#333333_63px,#9a9a9a_63px)] bg-clip-text text-transparent outline-none"
        />
        <button type="button" aria-label="Save to Pocket"><PocketOutline /></button>
        <button type="button" aria-label="History" className="ml-[6px]"><Caret /></button>
        <button type="button" aria-label="Reload" className="ml-[6px]"><ReloadIcon /></button>
      </div>
      <div className="ml-[7px] flex h-6 w-[190px] shrink-0 items-center rounded-[2px] border border-[#b3b0ab] bg-white pr-[3px] pl-1">
        <SearchIcon />
        <input
          aria-label="Search"
          defaultValue="ox group is unchecked"
          className="ml-1 min-w-0 flex-1 bg-transparent text-[15px] text-[#333] outline-none"
        />
        <button type="button" aria-label="Go" className="shrink-0"><GoIcon /></button>
      </div>
      <div className="ml-2 flex shrink-0 items-center gap-[10px]">
        <div className="flex items-center gap-[1px]">
          <ToolButton label="Bookmark"><StarIcon /></ToolButton>
          <span className="h-[18px] w-px bg-[#cfd3d8]" />
          <ToolButton label="Bookmarks list"><ClipboardIcon /></ToolButton>
        </div>
        <ToolButton label="Downloads"><DownloadIcon /></ToolButton>
        <ToolButton label="Home"><HomeIcon /></ToolButton>
        <div className="flex items-center gap-[3px]">
          <ToolButton label="Adblock Plus"><AbpIcon /></ToolButton>
          <button type="button" aria-label="Adblock options" className="flex w-3 justify-center"><Caret /></button>
        </div>
        <ToolButton label="Pushbullet"><PushbulletIcon /></ToolButton>
        <ToolButton label="Scripts"><ScriptIcon /></ToolButton>
        <button type="button" className="flex w-[83px] items-center pl-[7px]">
          <DoraIcon />
          <span className="ml-[9px]">dora2</span>
          <span className="ml-1"><Caret /></span>
        </button>
        <div className="flex items-center">
          <ToolButton label="Pocket"><PocketSolid /></ToolButton>
          <span className="mr-[1px] ml-[1px] h-[18px] w-px bg-[#cfd3d8]" />
          <button type="button" aria-label="Pocket options" className="flex w-3 justify-center"><Caret /></button>
        </div>
        <ToolButton label="Hello"><HelloIcon /></ToolButton>
      </div>
      <span className="mx-[6px] h-[30px] w-px shrink-0 bg-[#d3d6da]" />
      <ToolButton label="Menu"><MenuIcon /></ToolButton>
    </div>
  );
}

function Page() {
  return (
    <main className="flex-1 bg-[#222222] px-4 pt-5 font-['Lato',sans-serif] text-[15px] leading-[21px] text-white">
      <div className="mx-auto max-w-[1140px]">
        <nav aria-label="Site" className="flex h-[60px] items-center rounded-[4px] bg-[#375a7f] pr-[30px]">
          <a href="#" className="px-[15px] text-[20px]">Rideshare</a>
          <a href="#home" className="flex h-full items-center px-[15px]">Home</a>
          <a href="#trips" aria-current="page" className="flex h-full items-center bg-[#28415b] px-[15px]">Trips</a>
          <a href="#account" className="ml-auto flex h-full items-center px-[15px]">rahulhuilgol@gmail.com</a>
          <a href="#logout" className="flex h-full items-center px-[15px]">Logout</a>
        </nav>
        <h2 className="mt-[21px] mb-[11px] text-center text-[32px] leading-[35px]">My Trips</h2>
        <table className="w-full table-fixed border-collapse border border-[#464646]">
          <colgroup>
            {columns.map((c, i) => (
              <col key={i} className={c.width} />
            ))}
          </colgroup>
          <thead>
            <tr className="h-[38px] text-left">
              {columns.map((c, i) => (
                <th key={i} scope="col" className="border border-[#464646] px-2 py-2 font-bold">{c.label}</th>
              ))}
            </tr>
          </thead>
          <tbody>
            {trips.map((t, i) => (
              <tr key={i} className="h-[81px] bg-[#3d3d3d] align-top">
                <td className="border border-[#464646] p-2">{t.startedBy}</td>
                <td className="border border-[#464646] p-2">{t.source}</td>
                <td className="border border-[#464646] p-2">{t.destination}</td>
                <td className="border border-[#464646] p-2">{t.time}</td>
                <td className="border border-[#464646] p-2">{t.days}</td>
                <td className="border border-[#464646] p-2">{t.date}</td>
                <td className="border border-[#464646] p-2">
                  <button type="button" className="h-11 w-full rounded-[4px] bg-[#375a7f] whitespace-nowrap">Show rider details</button>
                </td>
                <td className="border border-[#464646] p-2">
                  <button type="button" className="h-11 w-full rounded-[4px] bg-[#f39c12] whitespace-nowrap">Delete Trip</button>
                </td>
              </tr>
            ))}
          </tbody>
        </table>
      </div>
    </main>
  );
}

export default function App() {
  return (
    <div className={`flex min-h-screen flex-col bg-[#222222] ${uiFont}`}>
      <SystemPanel />
      <div className="flex flex-1">
        <Launcher />
        <div className="flex min-w-0 flex-1 flex-col">
          <TabStrip />
          <Toolbar />
          <Page />
        </div>
      </div>
    </div>
  );
}
